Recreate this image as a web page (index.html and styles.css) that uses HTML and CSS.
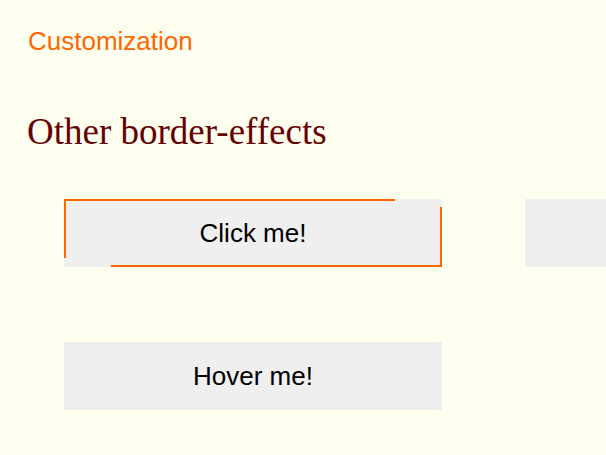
FILE: index.html
```html
<!DOCTYPE html>
<html>
    <head>
        <title>Border effects</title>
        <link rel="stylesheet" href="styles.css">
    </head>
    <body>
        <p class="crumb">Customization</p>
        <h2 class="title">Other border-effects</h2>
        <div class="row">
          <button type="button" class="btn btn-corner">Click me!</button>
          <button type="button" class="btn" aria-label="Click me!"></button>
        </div>
        <div class="row">
          <button type="button" class="btn btn-hover">Hover me!</button>
        </div>
    </body>
</html>
```

FILE: styles.css
```css
/*border effects*/
html, body {
  overflow-x: hidden;
}
body {
  margin: 0;
  padding: 26px 0 0 0;
  background-color: #fffff0;
}
.crumb {
  margin: 0 0 0 28px;
  font-family: "Liberation Sans", Arial, sans-serif;
  font-size: 26px;
  line-height: 30px;
  color: #ff6600;
}
.title {
  margin: 54px 0 0 27px;
  font-family: "Liberation Serif", "Times New Roman", serif;
  font-weight: normal;
  font-size: 37px;
  line-height: 43px;
  color: #660000;
}
.row {
  display: flex;
  gap: 83px;
  margin: 46px 0 0 64px;
}
.row + .row {
  margin-top: 75px;
}
.btn {
  position: relative;
  flex: 0 0 378px;
  height: 68px;
  padding: 0;
  border: none;
  outline: none;
  background-color: #efefef;
  font-family: "Liberation Sans", Arial, sans-serif;
  font-size: 26px;
  color: #000;
}
.btn-corner::before,
.btn-corner::after {
  content: "";
  position: absolute;
  width: 87.5%;
}
.btn-corner::before {
  top: 0;
  left: 0;
  height: 59px;
  border-top: 2px solid #ff6600;
  border-left: 2px solid #ff6600;
  box-sizing: border-box;
}
.btn-corner::after {
  right: 0;
  bottom: 0;
  height: 60px;
  border-right: 2px solid #ff6600;
  border-bottom: 2px solid #ff6600;
  box-sizing: border-box;
}
```
